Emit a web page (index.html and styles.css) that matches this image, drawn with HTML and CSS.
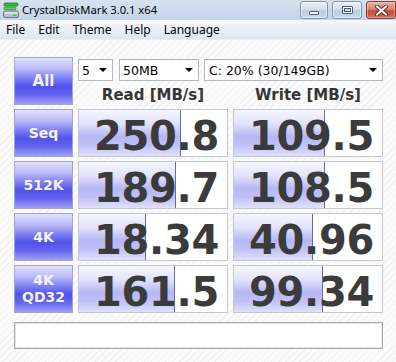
FILE: index.html
```html
<!DOCTYPE html>
<html>
<head>
<meta charset="utf-8">
<link rel="stylesheet" href="styles.css">
</head>
<body>
<div class="window">
  <header class="titlebar">
    <svg class="app-icon" width="16" height="16" viewBox="0 0 16 16">
      <rect x="1" y="1" width="14" height="3" rx="1" fill="#3cb83c" stroke="#1f7a22" stroke-width="0.8"/>
      <rect x="1" y="5" width="12" height="2.6" rx="1" fill="#5fd35a" stroke="#2a8a2c" stroke-width="0.8"/>
      <rect x="0.5" y="9" width="15" height="6.5" rx="1.5" fill="#b9c0c8" stroke="#5d646c" stroke-width="0.8"/>
      <rect x="1.5" y="10" width="13" height="2" fill="#dfe3e7"/>
      <rect x="10" y="12.5" width="3.5" height="1.6" fill="#3cd040"/>
    </svg>
    <span class="title">CrystalDiskMark 3.0.1 x64</span>
    <div class="controls">
      <span class="wbtn min"><i></i></span>
      <span class="wbtn max"><i></i></span>
      <span class="wbtn close">
        <svg width="13" height="11" viewBox="0 0 13 11">
          <path d="M2 1.5 L11 9.5 M11 1.5 L2 9.5" stroke="#5a2a24" stroke-width="4" stroke-linecap="round"/>
          <path d="M2 1.5 L11 9.5 M11 1.5 L2 9.5" stroke="#ffffff" stroke-width="2.2" stroke-linecap="round"/>
        </svg>
      </span>
    </div>
  </header>
  <nav class="menubar">
    <span class="mi">File</span>
    <span class="mi">Edit</span>
    <span class="mi">Theme</span>
    <span class="mi">Help</span>
    <span class="mi">Language</span>
  </nav>
  <main class="content">
    <div class="bench">
      <div class="test all">All</div>
      <div class="head">
        <div class="selects">
          <div class="sel s-count"><span>5</span><b class="arrow"></b></div>
          <div class="sel s-size"><span>50MB</span><b class="arrow"></b></div>
          <div class="sel s-drive"><span>C: 20% (30/149GB)</span><b class="arrow"></b></div>
        </div>
        <div class="labels">
          <span>Read [MB/s]</span>
          <span>Write [MB/s]</span>
        </div>
      </div>

      <div class="test">Seq</div>
      <div class="meter" style="--w:102px">250.8</div>
      <div class="meter" style="--w:91px">109.5</div>

      <div class="test">512K</div>
      <div class="meter" style="--w:97px">189.7</div>
      <div class="meter" style="--w:91px">108.5</div>

      <div class="test">4K</div>
      <div class="meter" style="--w:67px">18.34</div>
      <div class="meter" style="--w:79px">40.96</div>

      <div class="test two">4K<br>QD32</div>
      <div class="meter" style="--w:96px">161.5</div>
      <div class="meter" style="--w:89px">99.34</div>
    </div>
    <div class="comment"></div>
  </main>
</div>
</body>
</html>
```

FILE: styles.css
```css
* { box-sizing: border-box; }
html, body { margin: 0; padding: 0; height: 100%; }
body { font-family: "Noto Sans", "Open Sans", sans-serif; }

.window {
  display: flex;
  flex-direction: column;
  height: 100%;
  width: 396px;
  overflow: hidden;
}

/* title bar */
.titlebar {
  height: 20px;
  display: flex;
  align-items: center;
  background: linear-gradient(#d6e2f0, #c4d5e9);
  padding-left: 3px;
}
.app-icon { flex: none; }
.title {
  margin-left: 3px;
  font-size: 11.2px;
  color: #000;
  line-height: 20px;
}
.controls {
  margin-left: auto;
  display: flex;
  align-self: flex-start;
  margin-top: 1px;
  gap: 4px;
}
.wbtn {
  height: 18px;
  border: 1px solid #7f93ab;
  border-radius: 3px;
  display: flex;
  align-items: center;
  justify-content: center;
  background: linear-gradient(#e9eff7 0%, #d5e0ee 45%, #bccde3 55%, #c9d8ea 100%);
  box-shadow: inset 0 0 0 1px rgba(255,255,255,0.55);
}
.wbtn.min { width: 28px; }
.wbtn.max { width: 30px; }
.wbtn.close {
  width: 30px;
  border-color: #7a3a32;
  border-radius: 3px 0 3px 3px;
  background: linear-gradient(#eab2a6 0%, #d98472 45%, #c84a34 55%, #d06a58 100%);
  box-shadow: inset 0 0 0 1px rgba(255,220,210,0.5);
}
.min i {
  display: block;
  width: 10px;
  height: 4px;
  margin-top: 5px;
  background: #fff;
  border: 1px solid #4f5d70;
  border-radius: 1px;
}
.max i {
  display: block;
  width: 11px;
  height: 8px;
  border: 1px solid #4f5d70;
  box-shadow: inset 0 0 0 1px #fff, inset 0 0 0 2px #4f5d70;
  background: #c8d5e6;
  border-radius: 1px;
}

/* menu bar */
.menubar {
  height: 20px;
  display: flex;
  align-items: center;
  background: linear-gradient(#f6f8fc, #dde6f3);
  border-bottom: 1px solid #e8edf5;
  font-size: 12px;
  color: #000;
}
.mi { padding: 0 6.5px; line-height: 19px; }
.mi:first-child { padding-left: 6px; }

/* content */
.content {
  flex: 1;
  padding: 17px 13px 0 14px;
  background:
    repeating-linear-gradient(135deg, #fbfbfb 0 4px, #f1f1f1 4px 5px);
}
.bench {
  display: grid;
  grid-template-columns: 59px 150px 150px;
  grid-auto-rows: 48px;
  column-gap: 5px;
  row-gap: 4px;
}
.test {
  display: flex;
  align-items: center;
  justify-content: center;
  text-align: center;
  border: 1px solid #a4a4d0;
  background: linear-gradient(#e2e2fd 0%, #b8b8f8 25%, #7c7cf2 45%, #5252ec 62%, #6464ee 80%, #a0a0f6 100%);
  color: #f4f4ff;
  font-family: "DejaVu Sans", sans-serif;
  font-weight: bold;
  font-size: 14px;
  line-height: 17px;
}
.test.all { font-size: 15px; }

.head {
  grid-column: 2 / 4;
  display: flex;
  flex-direction: column;
}
.selects {
  display: flex;
  gap: 5px;
  margin-top: 2px;
}
.sel {
  height: 22px;
  background: #fff;
  border: 1px solid #b4b8c0;
  border-top-color: #a6aab2;
  display: flex;
  align-items: center;
  justify-content: space-between;
  padding: 0 5px 0 3px;
  font-family: "DejaVu Sans", sans-serif;
  font-size: 12.5px;
  color: #000;
}
.s-count { width: 35px; margin-right: 1px; }
.s-size { width: 80px; }
.s-drive { width: 179px; padding-left: 4px; }
.arrow {
  width: 0;
  height: 0;
  border-left: 4px solid transparent;
  border-right: 4px solid transparent;
  border-top: 4px solid #000;
}
.labels {
  display: grid;
  grid-template-columns: 150px 150px;
  column-gap: 5px;
  margin-top: 6px;
  text-align: center;
  font-family: "DejaVu Sans", sans-serif;
  font-weight: bold;
  font-size: 15px;
  line-height: 17px;
  color: #363636;
}

.meter {
  border: 1px solid #c6c6ce;
  background:
    linear-gradient(#6a6aa6, #6a6aa6) no-repeat calc(var(--w) - 1px) 0 / 1px 100%,
    linear-gradient(#f6f6ff 0%, #e2e2fc 30%, #b6b6f6 58%, #c2c2f8 78%, #e0e0fc 100%) no-repeat 0 0 / var(--w) 100%,
    #ffffff;
  font-family: "DejaVu Sans", sans-serif;
  font-weight: bold;
  font-size: 40px;
  line-height: 40px;
  padding-top: 6px;
  padding-right: 8px;
  text-align: right;
  color: #3b3b3b;
  letter-spacing: -0.3px;
}

.comment {
  margin-top: 9px;
  width: 369px;
  height: 27px;
  background: #fff;
  border: 1px solid #a9a9a9;
  box-shadow: inset 0 0 0 1px #e6e6e6;
}
```
